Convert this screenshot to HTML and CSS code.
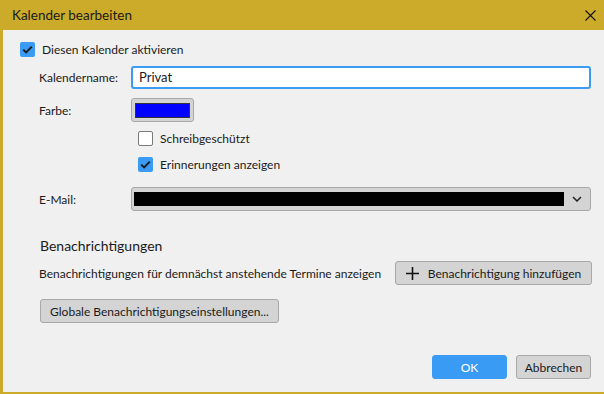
FILE: index.html
```html
<!DOCTYPE html>
<html lang="de">
<head>
    <meta charset="UTF-8">
    <meta name="viewport" content="width=device-width, initial-scale=1.0">
    <title>Kalender bearbeiten</title>
    <link rel="stylesheet" href="styles.css">
</head>
<body>
    <div class="dialog">
        <div class="titlebar">
            <span class="title">Kalender bearbeiten</span>
            <svg class="close" width="11" height="11" viewBox="0 0 11 11">
                <path d="M0.5 0.5 L10.5 10.5 M10.5 0.5 L0.5 10.5" stroke="#111" stroke-width="1.1" fill="none"/>
            </svg>
        </div>
        <div class="content">
            <label class="check top">
                <span class="box checked">
                    <svg width="15" height="15" viewBox="0 0 15 15"><path d="M3.2 7.6 L6.1 10.4 L11.8 4.6" stroke="#1b1b1b" stroke-width="2" fill="none"/></svg>
                </span>
                Diesen Kalender aktivieren
            </label>

            <div class="row name-row">
                <span class="label">Kalendername:</span>
                <div class="input">Privat</div>
            </div>

            <div class="row color-row">
                <span class="label">Farbe:</span>
                <div class="color-btn"><div class="swatch"></div></div>
            </div>

            <div class="options">
                <label class="check">
                    <span class="box"></span>
                    Schreibgeschützt
                </label>
                <label class="check">
                    <span class="box checked">
                        <svg width="15" height="15" viewBox="0 0 15 15"><path d="M3.2 7.6 L6.1 10.4 L11.8 4.6" stroke="#1b1b1b" stroke-width="2" fill="none"/></svg>
                    </span>
                    Erinnerungen anzeigen
                </label>
            </div>

            <div class="row mail-row">
                <span class="label">E-Mail:</span>
                <div class="select">
                    <div class="redacted"></div>
                    <svg width="10" height="6" viewBox="0 0 10 6"><path d="M1 1 L5 5 L9 1" stroke="#222" stroke-width="1.5" fill="none"/></svg>
                </div>
            </div>

            <h2 class="section">Benachrichtigungen</h2>
            <div class="notify-row">
                <span>Benachrichtigungen für demnächst anstehende Termine anzeigen</span>
                <div class="btn add">
                    <svg width="13" height="13" viewBox="0 0 13 13"><path d="M6.5 0 V13 M0 6.5 H13" stroke="#111" stroke-width="1.6"/></svg>
                    Benachrichtigung hinzufügen
                </div>
            </div>
            <div class="btn global">Globale Benachrichtigungseinstellungen...</div>

            <div class="footer">
                <div class="btn primary">OK</div>
                <div class="btn">Abbrechen</div>
            </div>
        </div>
    </div>
</body>
</html>
```

FILE: styles.css
```css
body {
    margin: 0;
    width: 604px;
    height: 394px;
    overflow: hidden;
    font-family: Lato, "Noto Sans", sans-serif;
    font-size: 12px;
    color: #1a1a1a;
    background: #f0f0f0;
    white-space: nowrap;
}
.dialog {
    width: 604px;
    height: 394px;
    box-sizing: border-box;
    border-left: 3px solid #ccab2a;
    border-bottom: 2px solid #ccab2a;
    background: #f0f0f0;
    display: flex;
    flex-direction: column;
}
.titlebar {
    height: 30px;
    margin-left: -3px;
    background: #ccab2a;
    display: flex;
    align-items: center;
    justify-content: space-between;
    padding: 0 8px 0 12px;
    flex-shrink: 0;
}
.title {
    font-size: 13.5px;
    color: #1a1a1a;
}
.close {
    margin-top: 1px;
}
.content {
    flex: 1;
    padding: 11px 13px 0 17px;
    display: flex;
    flex-direction: column;
}
.check {
    display: flex;
    align-items: center;
    gap: 7px;
    height: 16px;
}
.box {
    width: 13px;
    height: 13px;
    border: 1px solid #7a7a7a;
    background: #fff;
    border-radius: 2px;
    display: flex;
    align-items: center;
    justify-content: center;
}
.box.checked {
    width: 15px;
    height: 15px;
    border: none;
    background: #3a9bf4;
}
.row {
    display: flex;
    align-items: center;
}
.label {
    width: 92px;
    padding-left: 19px;
    flex-shrink: 0;
}
.name-row {
    margin-top: 9px;
}
.input {
    flex: 1;
    height: 19px;
    border: 2px solid #3a9bf4;
    border-radius: 3px;
    background: #fff;
    padding-left: 6px;
    line-height: 19px;
    font-size: 13px;
}
.color-row {
    margin-top: 9px;
}
.color-btn {
    width: 61px;
    height: 22px;
    border: 1px solid #a8a8a8;
    border-radius: 3px;
    background: #d4d4d4;
    display: flex;
    align-items: center;
    justify-content: center;
}
.swatch {
    width: 53px;
    height: 13px;
    background: #0000ff;
    border: 1px solid #333;
}
.options {
    margin-left: 118px;
    margin-top: 8px;
    display: flex;
    flex-direction: column;
    gap: 10px;
}
.mail-row {
    margin-top: 15px;
}
.select {
    flex: 1;
    height: 22px;
    border: 1px solid #a8a8a8;
    border-radius: 3px;
    background: #d4d4d4;
    display: flex;
    align-items: center;
    padding: 0 8px 0 2px;
    gap: 8px;
}
.redacted {
    flex: 1;
    height: 14px;
    background: #000;
}
.section {
    font-size: 14px;
    font-weight: normal;
    margin: 26px 0 0 20px;
    line-height: 18px;
}
.notify-row {
    display: flex;
    align-items: center;
    justify-content: space-between;
    margin: 6px 0 0 19px;
}
.btn {
    box-sizing: border-box;
    height: 24px;
    border: 1px solid #a8a8a8;
    border-radius: 3px;
    background: #d4d4d4;
    display: flex;
    align-items: center;
    justify-content: center;
    padding: 0 8px;
}
.add {
    gap: 9px;
    width: 197px;
    margin-right: -1px;
}
.global {
    align-self: flex-start;
    margin: 14px 0 0 20px;
    width: 239px;
}
.footer {
    margin-top: auto;
    margin-bottom: 13px;
    display: flex;
    justify-content: flex-end;
    gap: 9px;
}
.footer .btn {
    width: 75px;
}
.btn.primary {
    background: #3a9bf4;
    border-color: #3a9bf4;
    color: #fff;
}
```
